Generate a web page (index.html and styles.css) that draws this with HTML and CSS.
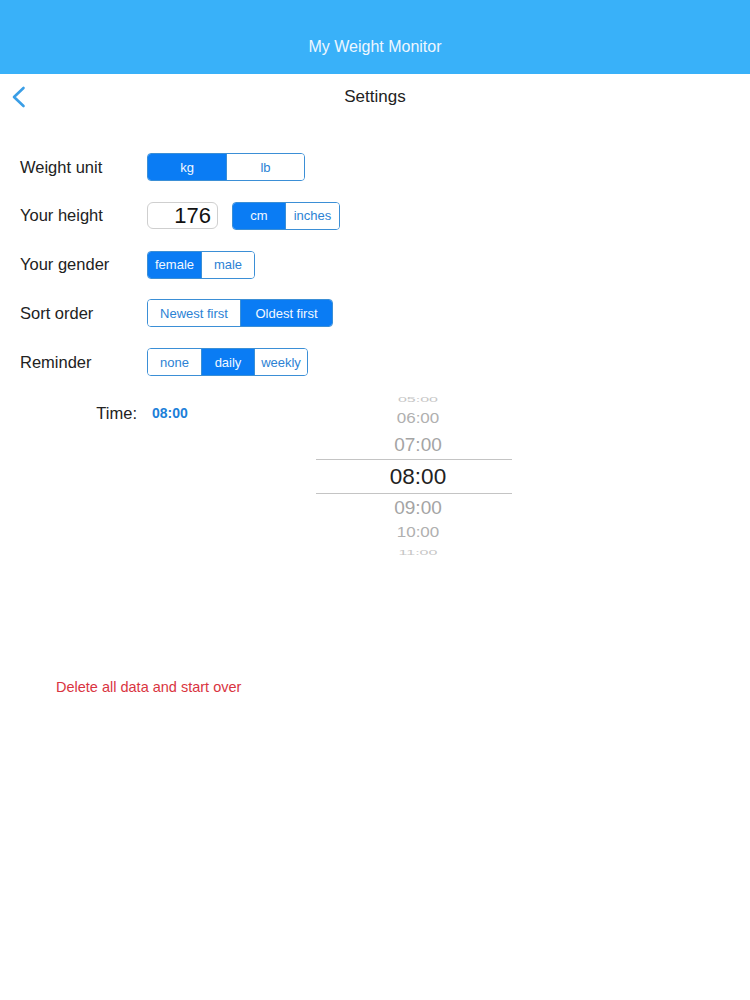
FILE: index.html
```html
<!DOCTYPE html>
<html>
<head>
<meta charset="utf-8">
<link rel="stylesheet" href="styles.css">
</head>
<body>
<header class="appbar"><span class="apptitle">My Weight Monitor</span></header>
<nav class="navbar">
  <a class="back"><svg width="16" height="22" viewBox="0 0 16 22"><path d="M12.5 2 L3 11 L12.5 20" fill="none" stroke="#3a9ee6" stroke-width="2.6" stroke-linecap="round" stroke-linejoin="round"/></svg></a>
  <span class="navtitle">Settings</span>
  <span></span>
</nav>
<main class="settings">
  <div class="row">
    <span class="label">Weight unit</span>
    <div class="seg"><span class="on w78">kg</span><span class="w78">lb</span></div>
  </div>
  <div class="row">
    <span class="label">Your height</span>
    <div class="heightbox">176</div>
    <div class="seg seg-gap"><span class="on w52">cm</span><span class="w54">inches</span></div>
  </div>
  <div class="row">
    <span class="label">Your gender</span>
    <div class="seg"><span class="on w53">female</span><span class="w53">male</span></div>
  </div>
  <div class="row">
    <span class="label">Sort order</span>
    <div class="seg"><span class="w92">Newest first</span><span class="on w92">Oldest first</span></div>
  </div>
  <div class="row">
    <span class="label">Reminder</span>
    <div class="seg"><span class="w53">none</span><span class="on w53">daily</span><span class="w53">weekly</span></div>
  </div>
</main>
<section class="timesec">
  <div class="timeinfo">
    <span class="timelabel">Time:</span>
    <span class="timevalue">08:00</span>
  </div>
  <div class="picker">
    <div class="pi p5">05:00</div>
    <div class="pi p6">06:00</div>
    <div class="pi p7">07:00</div>
    <div class="pi sel">08:00</div>
    <div class="pi p9">09:00</div>
    <div class="pi p10">10:00</div>
    <div class="pi p11">11:00</div>
  </div>
</section>
<div class="danger">Delete all data and start over</div>
</body>
</html>
```
FILE: styles.css
```css
html, body {
  margin: 0;
  padding: 0;
  background: #ffffff;
  font-family: "Liberation Sans", Arial, sans-serif;
  color: #222;
}
.appbar {
  height: 74px;
  box-sizing: border-box;
  padding-top: 20px;
  background: #39b1f9;
  display: flex;
  align-items: center;
  justify-content: center;
}
.apptitle {
  color: #eef7ff;
  font-size: 16px;
}
.navbar {
  height: 46px;
  display: grid;
  grid-template-columns: 1fr auto 1fr;
  align-items: center;
}
.back {
  display: flex;
  align-items: center;
  padding-left: 11px;
}
.navtitle {
  font-size: 17px;
  color: #222;
}
.settings {
  margin-top: 33px;
  padding-left: 20px;
  display: flex;
  flex-direction: column;
  gap: 20.75px;
}
.row {
  display: flex;
  align-items: center;
  height: 28px;
}
.label {
  width: 127px;
  font-size: 16.5px;
  color: #222;
}
.seg {
  display: flex;
  height: 28px;
  box-sizing: border-box;
  border: 1px solid #3b8fd6;
  border-radius: 4px;
  overflow: hidden;
}
.seg span {
  box-sizing: border-box;
  display: flex;
  align-items: center;
  justify-content: center;
  font-size: 13px;
  color: #2c82d4;
  background: #fff;
}
.seg span + span {
  border-left: 1px solid #3b8fd6;
}
.seg span.on {
  background: #0a7cf4;
  color: #f2f8ff;
}
.w52 { width: 52px; }
.w53 { width: 53px; }
.w54 { width: 54px; }
.w78 { width: 78px; }
.w92 { width: 92px; }
.heightbox {
  width: 71px;
  height: 27px;
  box-sizing: border-box;
  border: 1px solid #cfcfcf;
  border-radius: 6px;
  font-size: 22px;
  text-align: right;
  padding-right: 6px;
  line-height: 25px;
  color: #111;
}
.seg-gap {
  margin-left: 14px;
}
.timesec {
  margin-top: 14px;
  padding-left: 20px;
  display: flex;
}
.timeinfo {
  width: 296px;
  padding-top: 13px;
  display: flex;
  align-items: center;
  height: 20px;
  gap: 15px;
}
.timelabel {
  width: 117px;
  text-align: right;
  font-size: 16.5px;
  color: #222;
}
.timevalue {
  font-size: 14px;
  font-weight: bold;
  color: #1c80d9;
}
.picker {
  width: 196px;
  display: flex;
  flex-direction: column;
}
.pi {
  display: flex;
  align-items: center;
  justify-content: center;
  padding-left: 8px;
  color: #a9a9a9;
}
.p5 { height: 18px; font-size: 16px; transform: scaleY(0.5); color: #c6c6c6; }
.p6 { height: 22px; font-size: 17px; transform: scaleY(0.85); color: #b0b0b0; }
.p7 { height: 29px; font-size: 19px; color: #a4a4a4; }
.sel {
  height: 35px;
  box-sizing: border-box;
  border-top: 1px solid #c4c4c4;
  border-bottom: 1px solid #c4c4c4;
  font-size: 22.5px;
  color: #222;
}
.p9 { height: 27px; font-size: 19px; color: #a4a4a4; }
.p10 { height: 23px; font-size: 17px; transform: scaleY(0.85); color: #b0b0b0; }
.p11 { height: 16px; font-size: 16px; transform: scaleY(0.5); color: #c6c6c6; }
.danger {
  margin-top: 117px;
  padding-left: 56px;
  font-size: 14.5px;
  line-height: 20px;
  color: #d9343f;
}
```
